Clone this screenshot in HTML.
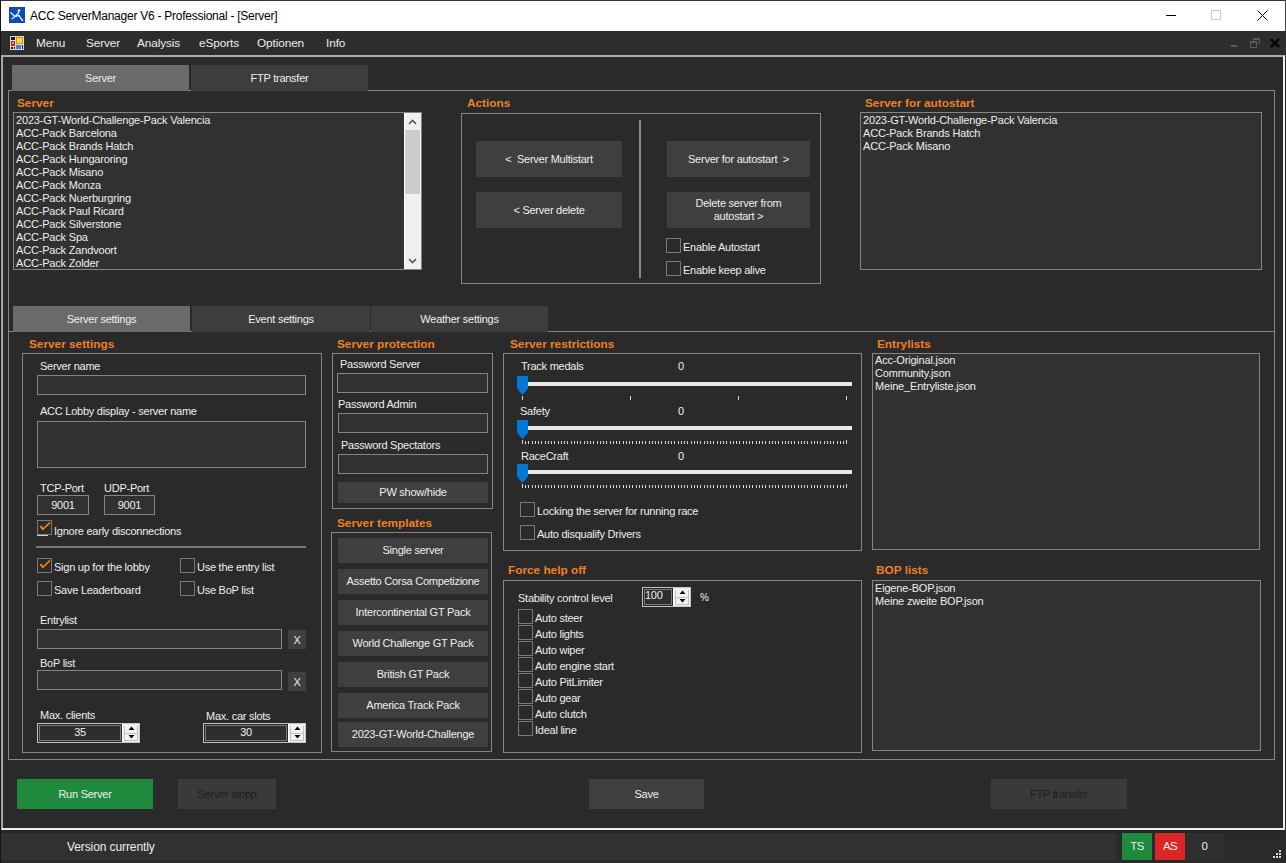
<!DOCTYPE html>
<html><head><meta charset="utf-8">
<style>
*{margin:0;padding:0;box-sizing:border-box}
html,body{width:1286px;height:863px;overflow:hidden;background:#2a2a2a;font-family:"Liberation Sans",sans-serif;color:#e8e8e8}
.a{position:absolute}
.t{position:absolute;white-space:nowrap;font-size:11px;letter-spacing:-0.25px;line-height:13px;color:#eeeeee;margin-top:0.5px}
.o{position:absolute;white-space:nowrap;font-size:11.8px;font-weight:bold;color:#f08020;line-height:14px}
.bx{position:absolute;border:1px solid #858585}
.tb{position:absolute;border:1px solid #858585;background:#313131}
.btn{position:absolute;background:#3f3f3f;color:#eeeeee;font-size:11px;letter-spacing:-0.25px;display:flex;align-items:center;justify-content:center;text-align:center;line-height:13px}
.cb{position:absolute;width:15px;height:15px;border:1px solid #7a7a7a}
.li{position:absolute;white-space:nowrap;font-size:11px;letter-spacing:-0.18px;line-height:13px;color:#eeeeee}
</style></head><body>
<!-- title bar -->
<div class="a" style="left:0;top:0;width:1286px;height:31px;background:#fff;border-top:1px solid #333;border-right:1px solid #444"></div>
<svg class="a" style="left:9px;top:7px" width="16" height="16"><rect width="16" height="16" fill="#0d49b8"/><path d="M1.5 5.5L6 9.5L10 8.5L12 11.5L14 14 M2.5 12L6 9.5L9.5 6L9.5 3" fill="none" stroke="#e8eef8" stroke-width="1.3"/><circle cx="10" cy="3.5" r="1.3" fill="#e8eef8"/></svg>
<div class="t" style="left:30px;top:8px;font-size:12px;letter-spacing:-0.25px;color:#000;line-height:15px">ACC ServerManager V6 - Professional - [Server]</div>
<div class="a" style="left:1166px;top:15px;width:10px;height:1px;background:#000"></div>
<div class="a" style="left:1211px;top:10px;width:10px;height:10px;border:1px solid #ccc"></div>
<svg class="a" style="left:1257px;top:10px" width="11" height="11"><path d="M0.5 0.5L10.5 10.5M10.5 0.5L0.5 10.5" stroke="#000" stroke-width="1"/></svg>
<!-- menubar -->
<div class="a" style="left:0;top:31px;width:1286px;height:25px;background:#2d2d2d"></div>
<svg class="a" style="left:10px;top:36px" width="14" height="14"><rect width="14" height="14" fill="#dedad6"/><rect x="1" y="1" width="4" height="3" fill="#1c1c1c"/><rect x="1" y="5" width="4" height="5" fill="#c8201c"/><rect x="2" y="6" width="2" height="2" fill="#f08a80"/><rect x="6" y="1" width="7" height="7" fill="#c89a08"/><rect x="7" y="2" width="5" height="5" fill="#ffd84a"/><rect x="6" y="9" width="5" height="4" fill="#3a7ee0"/><rect x="1" y="11" width="2" height="2" fill="#1c1c1c"/><rect x="4" y="11" width="1" height="2" fill="#1c1c1c"/><rect x="12" y="9" width="1" height="4" fill="#1c1c1c"/></svg>
<div class="a" style="left:1231px;top:45px;width:6px;height:2px;background:#5a5a5a"></div>
<svg class="a" style="left:1250px;top:38px" width="10" height="10"><path d="M3.5 2.5V0.5H9.5V5.5H7.5 M0.5 3.5H6.5V9.5H0.5Z M0.5 4.5H6.5 M3.5 1.5H9.5" fill="none" stroke="#5a5a5a" stroke-width="1"/></svg>
<svg class="a" style="left:1270px;top:38px" width="10" height="10"><path d="M1 1L9 9M9 1L1 9" stroke="#000" stroke-width="2.4"/></svg>
<div class="t" style="left:36px;top:35px;font-size:11.8px;letter-spacing:-0.1px;line-height:14px">Menu</div>
<div class="t" style="left:86px;top:35px;font-size:11.8px;letter-spacing:-0.1px;line-height:14px">Server</div>
<div class="t" style="left:137px;top:35px;font-size:11.8px;letter-spacing:-0.1px;line-height:14px">Analysis</div>
<div class="t" style="left:199px;top:35px;font-size:11.8px;letter-spacing:-0.1px;line-height:14px">eSports</div>
<div class="t" style="left:257px;top:35px;font-size:11.8px;letter-spacing:-0.1px;line-height:14px">Optionen</div>
<div class="t" style="left:326px;top:35px;font-size:11.8px;letter-spacing:-0.1px;line-height:14px">Info</div>

<!-- MDI child frame -->
<div class="a" style="left:1px;top:55px;width:1284px;height:775px;border:2px solid #f0f0f0;border-top-color:#aaa;border-left-color:#aaa"></div>

<!-- top tabs -->
<div class="btn" style="z-index:2;left:12px;top:65px;width:177px;height:26px;background:#6a6a6a;font-size:11px">Server</div>
<div class="btn" style="z-index:2;left:191px;top:65px;width:177px;height:26px;background:#3d3d3d;font-size:11px">FTP transfer</div>
<div class="bx" style="left:8px;top:90px;width:1267px;height:670px;border-bottom:none"></div>

<!-- Server list -->
<div class="o" style="left:17px;top:96px">Server</div>
<div class="tb" style="left:13px;top:112px;width:409px;height:158px"></div>
<div class="li" style="left:16px;top:114px">2023-GT-World-Challenge-Pack Valencia<br>ACC-Pack Barcelona<br>ACC-Pack Brands Hatch<br>ACC-Pack Hungaroring<br>ACC-Pack Misano<br>ACC-Pack Monza<br>ACC-Pack Nuerburgring<br>ACC-Pack Paul Ricard<br>ACC-Pack Silverstone<br>ACC-Pack Spa<br>ACC-Pack Zandvoort<br>ACC-Pack Zolder</div>
<div class="a" style="left:404px;top:113px;width:17px;height:156px;background:#f0f0f0;border-left:1px solid #fff"></div>
<div class="a" style="left:405px;top:130px;width:15px;height:64px;background:#cdcdcd"></div>
<svg class="a" style="left:408px;top:118px" width="9" height="8"><path d="M1 6L4.5 2.5L8 6" fill="none" stroke="#555" stroke-width="1.6"/></svg>
<svg class="a" style="left:408px;top:257px" width="9" height="8"><path d="M1 2L4.5 5.5L8 2" fill="none" stroke="#555" stroke-width="1.6"/></svg>

<!-- Actions -->
<div class="o" style="left:467px;top:96px">Actions</div>
<div class="bx" style="left:461px;top:113px;width:360px;height:171px"></div>
<div class="a" style="left:639px;top:120px;width:2px;height:158px;background:#8c8c8c"></div>
<div class="btn" style="left:476px;top:141px;width:146px;height:36px">&lt;&nbsp; Server Multistart</div>
<div class="btn" style="left:476px;top:192px;width:146px;height:36px">&lt; Server delete</div>
<div class="btn" style="left:667px;top:141px;width:143px;height:36px">Server for autostart &nbsp;&gt;</div>
<div class="btn" style="left:667px;top:192px;width:143px;height:36px">Delete server from<br>autostart &gt;</div>
<div class="cb" style="left:666px;top:238px"></div><div class="t" style="left:683px;top:240px">Enable Autostart</div>
<div class="cb" style="left:666px;top:261px"></div><div class="t" style="left:683px;top:263px">Enable keep alive</div>

<!-- autostart -->
<div class="o" style="left:865px;top:96px">Server for autostart</div>
<div class="tb" style="left:860px;top:112px;width:402px;height:158px"></div>
<div class="li" style="left:863px;top:114px">2023-GT-World-Challenge-Pack Valencia<br>ACC-Pack Brands Hatch<br>ACC-Pack Misano</div>

<!-- inner tabs -->
<div class="btn" style="z-index:2;left:13px;top:306px;width:177px;height:26px;background:#6a6a6a;font-size:11px">Server settings</div>
<div class="btn" style="z-index:2;left:192px;top:306px;width:178px;height:26px;background:#3d3d3d;font-size:11px">Event settings</div>
<div class="btn" style="z-index:2;left:371px;top:306px;width:177px;height:26px;background:#3d3d3d;font-size:11px">Weather settings</div>
<div class="bx" style="left:8px;top:331px;width:1267px;height:429px"></div>

<!-- server settings group -->
<div class="o" style="left:29px;top:337px">Server settings</div>
<div class="bx" style="left:22px;top:353px;width:300px;height:400px"></div>
<div class="t" style="left:40px;top:359px">Server name</div>
<div class="tb" style="left:37px;top:375px;width:269px;height:20px"></div>
<div class="t" style="left:40px;top:404px">ACC Lobby display - server name</div>
<div class="tb" style="left:37px;top:421px;width:269px;height:47px"></div>
<div class="t" style="left:40px;top:481px">TCP-Port</div>
<div class="t" style="left:104px;top:481px">UDP-Port</div>
<div class="tb" style="left:37px;top:495px;width:52px;height:20px"></div>
<div class="t" style="left:37px;top:498px;width:52px;text-align:center">9001</div>
<div class="tb" style="left:104px;top:495px;width:51px;height:20px"></div>
<div class="t" style="left:104px;top:498px;width:51px;text-align:center">9001</div>
<div class="cb" style="left:37px;top:520px"></div><svg class="a" style="left:37px;top:520px" width="15" height="15"><path d="M2.5 6.5L4.5 5.5L6 8L12.5 1.8L13.5 3L5.8 10.5Z" fill="#f5820f"/></svg><div class="a" style="left:37px;top:535px;width:11px;height:1px;background:#d0d0d0"></div><div class="t" style="left:54px;top:524px">Ignore early disconnections</div>
<div class="a" style="left:36px;top:546px;width:270px;height:2px;background:#787878"></div>
<div class="cb" style="left:37px;top:558px"></div><svg class="a" style="left:37px;top:558px" width="15" height="15"><path d="M2.5 6.5L4.5 5.5L6 8L12.5 1.8L13.5 3L5.8 10.5Z" fill="#f5820f"/></svg><div class="t" style="left:54px;top:560px">Sign up for the lobby</div>
<div class="cb" style="left:180px;top:558px"></div><div class="t" style="left:197px;top:560px">Use the entry list</div>
<div class="cb" style="left:37px;top:581px"></div><div class="t" style="left:54px;top:583px">Save Leaderboard</div>
<div class="cb" style="left:180px;top:581px"></div><div class="t" style="left:197px;top:583px">Use BoP list</div>
<div class="t" style="left:40px;top:613px">Entrylist</div>
<div class="tb" style="left:37px;top:629px;width:245px;height:20px"></div>
<div class="btn" style="left:288px;top:630px;width:18px;height:19px;padding-top:2px">X</div>
<div class="t" style="left:40px;top:656px">BoP list</div>
<div class="tb" style="left:37px;top:670px;width:245px;height:20px"></div>
<div class="btn" style="left:288px;top:672px;width:18px;height:19px;padding-top:2px">X</div>
<div class="t" style="left:40px;top:708px">Max. clients</div>
<div class="t" style="left:206px;top:709px">Max. car slots</div>
<div class="a" style="left:37px;top:723px;width:103px;height:20px;background:#262626;border:1px solid #c4c4c4"></div><div class="a" style="left:39px;top:725px;width:82px;height:16px;background:#2e2e2e;border:1px solid #7a7a7a"></div><div class="t" style="left:39px;top:725px;width:82px;text-align:center">35</div><div class="a" style="left:122px;top:724px;width:17px;height:18px;background:#f2f2f2;border-left:1px solid #fff"></div><div class="a" style="left:124px;top:726px;width:14px;height:15px;border:1px solid #c0c0c0;border-top:none"></div><div class="a" style="left:124px;top:733px;width:14px;height:1px;background:#c0c0c0"></div><svg class="a" style="left:128px;top:726px" width="7" height="13"><path d="M3.5 0.5L6.5 4H0.5Z M0.5 9H6.5L3.5 12.5Z" fill="#000"/></svg>
<div class="a" style="left:203px;top:723px;width:103px;height:20px;background:#262626;border:1px solid #c4c4c4"></div><div class="a" style="left:205px;top:725px;width:82px;height:16px;background:#2e2e2e;border:1px solid #7a7a7a"></div><div class="t" style="left:205px;top:725px;width:82px;text-align:center">30</div><div class="a" style="left:288px;top:724px;width:17px;height:18px;background:#f2f2f2;border-left:1px solid #fff"></div><div class="a" style="left:290px;top:726px;width:14px;height:15px;border:1px solid #c0c0c0;border-top:none"></div><div class="a" style="left:290px;top:733px;width:14px;height:1px;background:#c0c0c0"></div><svg class="a" style="left:294px;top:726px" width="7" height="13"><path d="M3.5 0.5L6.5 4H0.5Z M0.5 9H6.5L3.5 12.5Z" fill="#000"/></svg>

<!-- server protection -->
<div class="o" style="left:337px;top:337px">Server protection</div>
<div class="bx" style="left:332px;top:353px;width:161px;height:156px"></div>
<div class="t" style="left:340px;top:357px">Password Server</div>
<div class="tb" style="left:337px;top:373px;width:151px;height:20px"></div>
<div class="t" style="left:338px;top:397px">Password Admin</div>
<div class="tb" style="left:338px;top:413px;width:150px;height:20px"></div>
<div class="t" style="left:341px;top:438px">Password Spectators</div>
<div class="tb" style="left:338px;top:454px;width:150px;height:20px"></div>
<div class="btn" style="left:338px;top:482px;width:150px;height:21px">PW show/hide</div>

<!-- server templates -->
<div class="o" style="left:337px;top:516px">Server templates</div>
<div class="bx" style="left:331px;top:532px;width:161px;height:220px"></div>
<div class="btn" style="left:338px;top:538px;width:150px;height:25px">Single server</div>
<div class="btn" style="left:338px;top:569px;width:150px;height:25px">Assetto Corsa Competizione</div>
<div class="btn" style="left:338px;top:600px;width:150px;height:25px">Intercontinental GT Pack</div>
<div class="btn" style="left:338px;top:631px;width:150px;height:25px">World Challenge GT Pack</div>
<div class="btn" style="left:338px;top:662px;width:150px;height:25px">British GT Pack</div>
<div class="btn" style="left:338px;top:693px;width:150px;height:25px">America Track Pack</div>
<div class="btn" style="left:338px;top:722px;width:150px;height:25px">2023-GT-World-Challenge</div>

<!-- server restrictions -->
<div class="o" style="left:510px;top:337px">Server restrictions</div>
<div class="bx" style="left:503px;top:353px;width:359px;height:198px"></div>
<div class="t" style="left:521px;top:359px">Track medals</div>
<div class="t" style="left:678px;top:359px">0</div>
<div class="t" style="left:520px;top:404px">Safety</div>
<div class="t" style="left:678px;top:404px">0</div>
<div class="t" style="left:521px;top:449px">RaceCraft</div>
<div class="t" style="left:678px;top:449px">0</div>
<div class="a" style="left:522px;top:382px;width:330px;height:4px;background:#e8e8e8"></div>
<svg class="a" style="left:517px;top:376px" width="11" height="19"><path d="M0 0H11V12.5L5.5 19L0 12.5Z" fill="#0078d7"/></svg>
<svg class="a" style="left:522px;top:396px" width="326" height="4" fill="#d8d8d8"><rect x="0" y="0" width="1" height="4"/><rect x="108" y="0" width="1" height="4"/><rect x="216" y="0" width="1" height="4"/><rect x="324" y="0" width="1" height="4"/></svg>
<div class="a" style="left:522px;top:426px;width:330px;height:4px;background:#e8e8e8"></div>
<svg class="a" style="left:517px;top:420px" width="11" height="19"><path d="M0 0H11V12.5L5.5 19L0 12.5Z" fill="#0078d7"/></svg>
<svg class="a" style="left:522px;top:440px" width="326" height="4" fill="#d8d8d8"><rect x="0" y="0" width="1" height="4"/><rect x="3" y="1" width="1" height="3"/><rect x="6" y="1" width="1" height="3"/><rect x="10" y="1" width="1" height="3"/><rect x="13" y="1" width="1" height="3"/><rect x="16" y="1" width="1" height="3"/><rect x="19" y="1" width="1" height="3"/><rect x="23" y="1" width="1" height="3"/><rect x="26" y="1" width="1" height="3"/><rect x="29" y="1" width="1" height="3"/><rect x="32" y="1" width="1" height="3"/><rect x="36" y="1" width="1" height="3"/><rect x="39" y="1" width="1" height="3"/><rect x="42" y="1" width="1" height="3"/><rect x="45" y="1" width="1" height="3"/><rect x="49" y="1" width="1" height="3"/><rect x="52" y="1" width="1" height="3"/><rect x="55" y="1" width="1" height="3"/><rect x="58" y="1" width="1" height="3"/><rect x="62" y="1" width="1" height="3"/><rect x="65" y="1" width="1" height="3"/><rect x="68" y="1" width="1" height="3"/><rect x="71" y="1" width="1" height="3"/><rect x="75" y="1" width="1" height="3"/><rect x="78" y="1" width="1" height="3"/><rect x="81" y="1" width="1" height="3"/><rect x="84" y="1" width="1" height="3"/><rect x="88" y="1" width="1" height="3"/><rect x="91" y="1" width="1" height="3"/><rect x="94" y="1" width="1" height="3"/><rect x="97" y="1" width="1" height="3"/><rect x="101" y="1" width="1" height="3"/><rect x="104" y="1" width="1" height="3"/><rect x="107" y="1" width="1" height="3"/><rect x="110" y="1" width="1" height="3"/><rect x="114" y="1" width="1" height="3"/><rect x="117" y="1" width="1" height="3"/><rect x="120" y="1" width="1" height="3"/><rect x="123" y="1" width="1" height="3"/><rect x="127" y="1" width="1" height="3"/><rect x="130" y="1" width="1" height="3"/><rect x="133" y="1" width="1" height="3"/><rect x="136" y="1" width="1" height="3"/><rect x="139" y="1" width="1" height="3"/><rect x="143" y="1" width="1" height="3"/><rect x="146" y="1" width="1" height="3"/><rect x="149" y="1" width="1" height="3"/><rect x="152" y="1" width="1" height="3"/><rect x="156" y="1" width="1" height="3"/><rect x="159" y="1" width="1" height="3"/><rect x="162" y="1" width="1" height="3"/><rect x="165" y="1" width="1" height="3"/><rect x="169" y="1" width="1" height="3"/><rect x="172" y="1" width="1" height="3"/><rect x="175" y="1" width="1" height="3"/><rect x="178" y="1" width="1" height="3"/><rect x="182" y="1" width="1" height="3"/><rect x="185" y="1" width="1" height="3"/><rect x="188" y="1" width="1" height="3"/><rect x="191" y="1" width="1" height="3"/><rect x="195" y="1" width="1" height="3"/><rect x="198" y="1" width="1" height="3"/><rect x="201" y="1" width="1" height="3"/><rect x="204" y="1" width="1" height="3"/><rect x="208" y="1" width="1" height="3"/><rect x="211" y="1" width="1" height="3"/><rect x="214" y="1" width="1" height="3"/><rect x="217" y="1" width="1" height="3"/><rect x="221" y="1" width="1" height="3"/><rect x="224" y="1" width="1" height="3"/><rect x="227" y="1" width="1" height="3"/><rect x="230" y="1" width="1" height="3"/><rect x="234" y="1" width="1" height="3"/><rect x="237" y="1" width="1" height="3"/><rect x="240" y="1" width="1" height="3"/><rect x="243" y="1" width="1" height="3"/><rect x="247" y="1" width="1" height="3"/><rect x="250" y="1" width="1" height="3"/><rect x="253" y="1" width="1" height="3"/><rect x="256" y="1" width="1" height="3"/><rect x="260" y="1" width="1" height="3"/><rect x="263" y="1" width="1" height="3"/><rect x="266" y="1" width="1" height="3"/><rect x="269" y="1" width="1" height="3"/><rect x="272" y="1" width="1" height="3"/><rect x="276" y="1" width="1" height="3"/><rect x="279" y="1" width="1" height="3"/><rect x="282" y="1" width="1" height="3"/><rect x="285" y="1" width="1" height="3"/><rect x="289" y="1" width="1" height="3"/><rect x="292" y="1" width="1" height="3"/><rect x="295" y="1" width="1" height="3"/><rect x="298" y="1" width="1" height="3"/><rect x="302" y="1" width="1" height="3"/><rect x="305" y="1" width="1" height="3"/><rect x="308" y="1" width="1" height="3"/><rect x="311" y="1" width="1" height="3"/><rect x="315" y="1" width="1" height="3"/><rect x="318" y="1" width="1" height="3"/><rect x="321" y="1" width="1" height="3"/><rect x="324" y="0" width="1" height="4"/></svg>
<div class="a" style="left:522px;top:470px;width:330px;height:4px;background:#e8e8e8"></div>
<svg class="a" style="left:517px;top:464px" width="11" height="19"><path d="M0 0H11V12.5L5.5 19L0 12.5Z" fill="#0078d7"/></svg>
<svg class="a" style="left:522px;top:484px" width="326" height="4" fill="#d8d8d8"><rect x="0" y="0" width="1" height="4"/><rect x="3" y="1" width="1" height="3"/><rect x="6" y="1" width="1" height="3"/><rect x="10" y="1" width="1" height="3"/><rect x="13" y="1" width="1" height="3"/><rect x="16" y="1" width="1" height="3"/><rect x="19" y="1" width="1" height="3"/><rect x="23" y="1" width="1" height="3"/><rect x="26" y="1" width="1" height="3"/><rect x="29" y="1" width="1" height="3"/><rect x="32" y="1" width="1" height="3"/><rect x="36" y="1" width="1" height="3"/><rect x="39" y="1" width="1" height="3"/><rect x="42" y="1" width="1" height="3"/><rect x="45" y="1" width="1" height="3"/><rect x="49" y="1" width="1" height="3"/><rect x="52" y="1" width="1" height="3"/><rect x="55" y="1" width="1" height="3"/><rect x="58" y="1" width="1" height="3"/><rect x="62" y="1" width="1" height="3"/><rect x="65" y="1" width="1" height="3"/><rect x="68" y="1" width="1" height="3"/><rect x="71" y="1" width="1" height="3"/><rect x="75" y="1" width="1" height="3"/><rect x="78" y="1" width="1" height="3"/><rect x="81" y="1" width="1" height="3"/><rect x="84" y="1" width="1" height="3"/><rect x="88" y="1" width="1" height="3"/><rect x="91" y="1" width="1" height="3"/><rect x="94" y="1" width="1" height="3"/><rect x="97" y="1" width="1" height="3"/><rect x="101" y="1" width="1" height="3"/><rect x="104" y="1" width="1" height="3"/><rect x="107" y="1" width="1" height="3"/><rect x="110" y="1" width="1" height="3"/><rect x="114" y="1" width="1" height="3"/><rect x="117" y="1" width="1" height="3"/><rect x="120" y="1" width="1" height="3"/><rect x="123" y="1" width="1" height="3"/><rect x="127" y="1" width="1" height="3"/><rect x="130" y="1" width="1" height="3"/><rect x="133" y="1" width="1" height="3"/><rect x="136" y="1" width="1" height="3"/><rect x="139" y="1" width="1" height="3"/><rect x="143" y="1" width="1" height="3"/><rect x="146" y="1" width="1" height="3"/><rect x="149" y="1" width="1" height="3"/><rect x="152" y="1" width="1" height="3"/><rect x="156" y="1" width="1" height="3"/><rect x="159" y="1" width="1" height="3"/><rect x="162" y="1" width="1" height="3"/><rect x="165" y="1" width="1" height="3"/><rect x="169" y="1" width="1" height="3"/><rect x="172" y="1" width="1" height="3"/><rect x="175" y="1" width="1" height="3"/><rect x="178" y="1" width="1" height="3"/><rect x="182" y="1" width="1" height="3"/><rect x="185" y="1" width="1" height="3"/><rect x="188" y="1" width="1" height="3"/><rect x="191" y="1" width="1" height="3"/><rect x="195" y="1" width="1" height="3"/><rect x="198" y="1" width="1" height="3"/><rect x="201" y="1" width="1" height="3"/><rect x="204" y="1" width="1" height="3"/><rect x="208" y="1" width="1" height="3"/><rect x="211" y="1" width="1" height="3"/><rect x="214" y="1" width="1" height="3"/><rect x="217" y="1" width="1" height="3"/><rect x="221" y="1" width="1" height="3"/><rect x="224" y="1" width="1" height="3"/><rect x="227" y="1" width="1" height="3"/><rect x="230" y="1" width="1" height="3"/><rect x="234" y="1" width="1" height="3"/><rect x="237" y="1" width="1" height="3"/><rect x="240" y="1" width="1" height="3"/><rect x="243" y="1" width="1" height="3"/><rect x="247" y="1" width="1" height="3"/><rect x="250" y="1" width="1" height="3"/><rect x="253" y="1" width="1" height="3"/><rect x="256" y="1" width="1" height="3"/><rect x="260" y="1" width="1" height="3"/><rect x="263" y="1" width="1" height="3"/><rect x="266" y="1" width="1" height="3"/><rect x="269" y="1" width="1" height="3"/><rect x="272" y="1" width="1" height="3"/><rect x="276" y="1" width="1" height="3"/><rect x="279" y="1" width="1" height="3"/><rect x="282" y="1" width="1" height="3"/><rect x="285" y="1" width="1" height="3"/><rect x="289" y="1" width="1" height="3"/><rect x="292" y="1" width="1" height="3"/><rect x="295" y="1" width="1" height="3"/><rect x="298" y="1" width="1" height="3"/><rect x="302" y="1" width="1" height="3"/><rect x="305" y="1" width="1" height="3"/><rect x="308" y="1" width="1" height="3"/><rect x="311" y="1" width="1" height="3"/><rect x="315" y="1" width="1" height="3"/><rect x="318" y="1" width="1" height="3"/><rect x="321" y="1" width="1" height="3"/><rect x="324" y="0" width="1" height="4"/></svg>
<div class="cb" style="left:520px;top:502px"></div><div class="t" style="left:537px;top:504px">Locking the server for running race</div>
<div class="cb" style="left:520px;top:525px"></div><div class="t" style="left:537px;top:527px">Auto disqualify Drivers</div>

<!-- force help off -->
<div class="o" style="left:508px;top:563px">Force help off</div>
<div class="bx" style="left:503px;top:580px;width:359px;height:173px"></div>
<div class="t" style="left:518px;top:591px">Stability control level</div>
<div class="a" style="left:642px;top:587px;width:49px;height:20px;background:#262626;border:1px solid #c4c4c4"></div><div class="a" style="left:644px;top:589px;width:28px;height:16px;background:#2e2e2e;border:1px solid #7a7a7a"></div><div class="t" style="left:645px;top:588px">100</div><div class="a" style="left:673px;top:588px;width:17px;height:18px;background:#f2f2f2;border-left:1px solid #fff"></div><div class="a" style="left:675px;top:590px;width:14px;height:15px;border:1px solid #c0c0c0;border-top:none"></div><div class="a" style="left:675px;top:597px;width:14px;height:1px;background:#c0c0c0"></div><svg class="a" style="left:679px;top:590px" width="7" height="13"><path d="M3.5 0.5L6.5 4H0.5Z M0.5 9H6.5L3.5 12.5Z" fill="#000"/></svg>
<div class="t" style="left:700px;top:590px;font-size:10px">%</div>
<div class="cb" style="left:518px;top:609px"></div><div class="t" style="left:535px;top:611px">Auto steer</div>
<div class="cb" style="left:518px;top:625px"></div><div class="t" style="left:535px;top:627px">Auto lights</div>
<div class="cb" style="left:518px;top:641px"></div><div class="t" style="left:535px;top:643px">Auto wiper</div>
<div class="cb" style="left:518px;top:657px"></div><div class="t" style="left:535px;top:659px">Auto engine start</div>
<div class="cb" style="left:518px;top:673px"></div><div class="t" style="left:535px;top:675px">Auto PitLimiter</div>
<div class="cb" style="left:518px;top:689px"></div><div class="t" style="left:535px;top:691px">Auto gear</div>
<div class="cb" style="left:518px;top:705px"></div><div class="t" style="left:535px;top:707px">Auto clutch</div>
<div class="cb" style="left:518px;top:721px"></div><div class="t" style="left:535px;top:723px">Ideal line</div>

<!-- entrylists -->
<div class="o" style="left:877px;top:337px">Entrylists</div>
<div class="tb" style="left:872px;top:353px;width:388px;height:197px"></div>
<div class="li" style="left:875px;top:354px">Acc-Original.json<br>Community.json<br>Meine_Entryliste.json</div>
<div class="o" style="left:876px;top:563px">BOP lists</div>
<div class="tb" style="left:872px;top:580px;width:389px;height:171px"></div>
<div class="li" style="left:875px;top:582px">Eigene-BOP.json<br>Meine zweite BOP.json</div>

<!-- bottom buttons -->
<div class="btn" style="left:17px;top:779px;width:136px;height:30px;background:#1f8a3e;font-size:11px">Run Server</div>
<div class="btn" style="left:178px;top:779px;width:98px;height:30px;background:#3a3a3a;color:#1e1e1e;font-size:11px">Server stopp</div>
<div class="btn" style="left:589px;top:779px;width:115px;height:30px;background:#3f3f3f;font-size:11px">Save</div>
<div class="btn" style="left:991px;top:779px;width:136px;height:30px;background:#3a3a3a;color:#1e1e1e;font-size:11px">FTP transfer</div>

<!-- status bar -->
<div class="a" style="left:0;top:830px;width:1286px;height:33px;background:#313131;border-top:3px solid #262626;border-bottom:3px solid #2a2a2a;border-left:1px solid #1c1c1c"></div>
<div class="t" style="left:67px;top:839px;font-size:12px;letter-spacing:-0.1px;line-height:14px">Version currently</div>
<div class="a" style="left:1116px;top:833px;width:170px;height:27px;background:#2a2a2a"></div>
<div class="btn" style="left:1122px;top:833px;width:30px;height:27px;background:#1f8a3e;font-size:11.5px;letter-spacing:-0.6px">TS</div>
<div class="btn" style="left:1155px;top:833px;width:30px;height:27px;background:#dc2626;font-size:11.5px;letter-spacing:-0.6px">AS</div>
<div class="btn" style="left:1185px;top:833px;width:39px;height:27px;background:#2f2f2f;font-size:11.5px">0</div>
<svg class="a" style="left:1271px;top:848px" width="12" height="12" fill="#d8d8d8"><rect x="8" y="2" width="2" height="2"/><rect x="5" y="5" width="2" height="2"/><rect x="8" y="5" width="2" height="2"/><rect x="2" y="8" width="2" height="2"/><rect x="5" y="8" width="2" height="2"/><rect x="8" y="8" width="2" height="2"/></svg>
<div class="a" style="left:0;top:0;width:1px;height:863px;background:#141414;z-index:5"></div>
</body></html>
